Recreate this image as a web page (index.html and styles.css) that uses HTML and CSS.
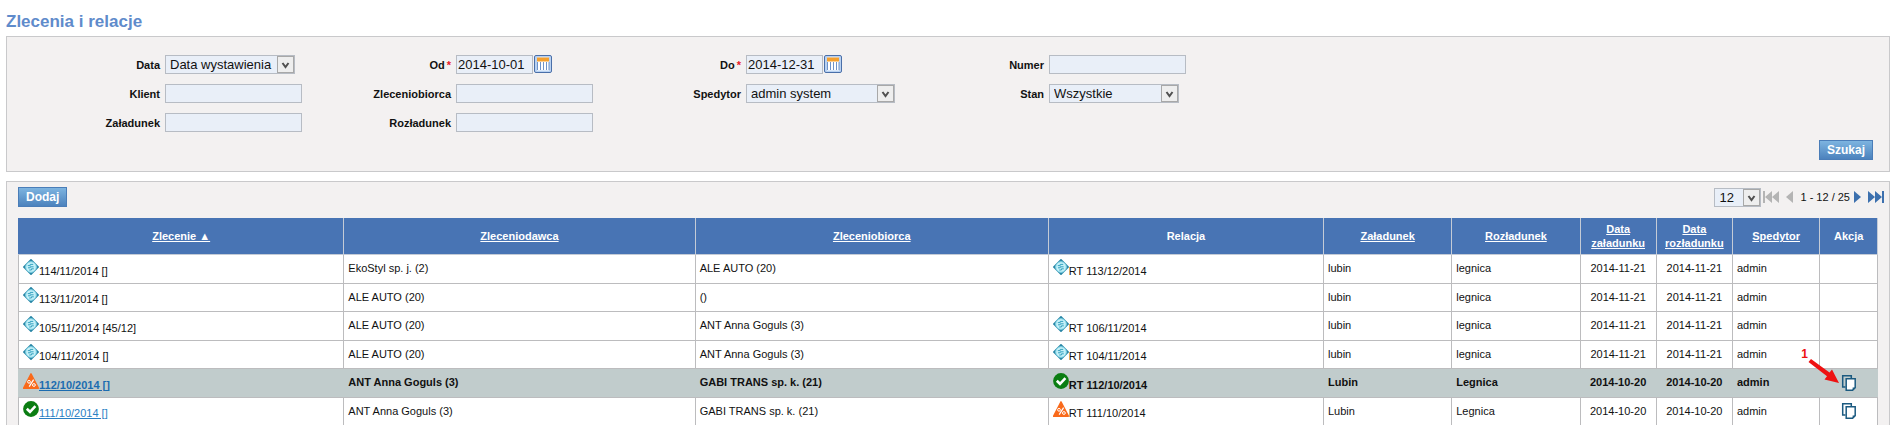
FILE: index.html
```html
<!DOCTYPE html>
<html lang="pl">
<head>
    <meta charset="UTF-8">
    <meta name="viewport" content="width=device-width, initial-scale=1.0">
    <title>Zlecenia i relacje</title>
    <link rel="stylesheet" href="styles.css">
</head>
<body>
    <!-- shared icons -->
    <svg class="sprite" aria-hidden="true">
        <symbol id="i-new" viewBox="0 0 16 16">
            <path d="M8 0.8 15.2 8 8 15.2 0.8 8Z" fill="#3c9dba" stroke="#2a86a6" stroke-width="1.6" stroke-linejoin="round"/>
            <circle cx="8" cy="8" r="5.3" fill="#c4f0f8" stroke="#7fd3e4"/>
            <path d="M4.8 6.6h2.4v-1.2h3M5 8.8h2.2v-1h3.4M6.2 11h2.2v-1.2h2.4" fill="none" stroke="#38a3c0"/>
        </symbol>
        <symbol id="i-warn" viewBox="0 0 16 16">
            <path d="M8 0.8 15.4 15.2H0.6Z" fill="#f96a1b" stroke="#f96a1b" stroke-width="1.4" stroke-linejoin="round"/>
            <path d="M10.6 6.6 6.2 13.6" stroke="#fff" stroke-width="1.2"/>
            <circle cx="6" cy="8.8" r="1.4" fill="none" stroke="#fff"/>
            <circle cx="10.9" cy="12" r="1.4" fill="none" stroke="#fff"/>
        </symbol>
        <symbol id="i-ok" viewBox="0 0 16 16">
            <circle cx="8" cy="8" r="7.9" fill="#0b7d12"/>
            <path d="M3.8 7.8 7 10.8 12.4 5.2" fill="none" stroke="#fff" stroke-width="2.6"/>
        </symbol>
        <symbol id="i-copy" viewBox="0 0 16 18">
            <path d="M4.5 12.9H1.7V1.7h8.6v2.4" fill="none" stroke="#1b5a80" stroke-width="1.5"/>
            <path d="M5.2 4.7h9v9l-2.6 2.6H5.2Z" fill="#fff" stroke="#1b5a80" stroke-width="1.5"/>
            <path d="M14.2 13.4h-2.6v2.9Z" fill="#1b5a80"/>
        </symbol>
        <symbol id="i-cal" viewBox="0 0 18 18">
            <rect x="0.5" y="0.5" width="17" height="17" rx="1.5" fill="#b9d2f2" stroke="#4a6fa8"/>
            <rect x="3" y="2.5" width="12" height="13" fill="#fff"/>
            <rect x="3" y="2.5" width="12" height="4" fill="#f5a02d"/>
            <path d="M3.5 7v8M6.5 7v8M9.5 7v8M12.5 7v8M15 7v8" stroke="#6f93c8"/>
        </symbol>
    </svg>

    <h1>Zlecenia i relacje</h1>

    <form class="panel search">
        <div class="fields">
            <div class="field">
                <label for="date-type">Data</label>
                <select id="date-type" class="w-medium"><option>Data wystawienia</option></select>
            </div>
            <div class="field">
                <label for="from">Od<span class="required">*</span></label>
                <div class="date">
                    <input type="text" id="from" value="2014-10-01">
                    <button type="button" class="icon-btn" aria-label="Kalendarz"><svg><use href="#i-cal"/></svg></button>
                </div>
            </div>
            <div class="field">
                <label for="to">Do<span class="required">*</span></label>
                <div class="date">
                    <input type="text" id="to" value="2014-12-31">
                    <button type="button" class="icon-btn" aria-label="Kalendarz"><svg><use href="#i-cal"/></svg></button>
                </div>
            </div>
            <div class="field">
                <label for="number">Numer</label>
                <input type="text" id="number">
            </div>
            <div class="field">
                <label for="client">Klient</label>
                <input type="text" id="client">
            </div>
            <div class="field">
                <label for="contractor">Zleceniobiorca</label>
                <input type="text" id="contractor">
            </div>
            <div class="field">
                <label for="forwarder">Spedytor</label>
                <select id="forwarder" class="w-wide"><option>admin system</option></select>
            </div>
            <div class="field">
                <label for="state">Stan</label>
                <select id="state" class="w-medium"><option>Wszystkie</option></select>
            </div>
            <div class="field">
                <label for="loading">Załadunek</label>
                <input type="text" id="loading">
            </div>
            <div class="field">
                <label for="unloading">Rozładunek</label>
                <input type="text" id="unloading">
            </div>
        </div>
        <div class="actions">
            <button type="submit" class="btn">Szukaj</button>
        </div>
    </form>

    <div class="panel list">
        <div class="toolbar">
            <button type="button" class="btn">Dodaj</button>
            <div class="pager">
                <select class="w-small" aria-label="Liczba wierszy"><option>12</option></select>
                <button type="button" class="page-btn first off" aria-label="Pierwsza">
                    <svg width="16" height="12"><path d="M0 0h2v12H0zM9 0v12L2 6zM16 0v12L9 6z"/></svg>
                </button>
                <button type="button" class="page-btn off" aria-label="Poprzednia">
                    <svg width="7" height="12"><path d="M7 0v12L0 6z"/></svg>
                </button>
                <span>1 - 12 / 25</span>
                <button type="button" class="page-btn" aria-label="Następna">
                    <svg width="7" height="12"><path d="M0 0v12l7-6z"/></svg>
                </button>
                <button type="button" class="page-btn" aria-label="Ostatnia">
                    <svg width="16" height="12"><path d="M0 0v12l7-6zM7 0v12l7-6zM14 0h2v12h-2z"/></svg>
                </button>
            </div>
        </div>

        <table>
            <colgroup>
                <col class="c-order"><col class="c-client"><col class="c-contractor"><col class="c-relation">
                <col class="c-place"><col class="c-place"><col class="c-date"><col class="c-date">
                <col class="c-user"><col class="c-action">
            </colgroup>
            <thead>
                <tr>
                    <th><a href="#">Zlecenie ▲</a></th>
                    <th><a href="#">Zleceniodawca</a></th>
                    <th><a href="#">Zleceniobiorca</a></th>
                    <th>Relacja</th>
                    <th><a href="#">Załadunek</a></th>
                    <th><a href="#">Rozładunek</a></th>
                    <th><a href="#">Data załadunku</a></th>
                    <th><a href="#">Data rozładunku</a></th>
                    <th><a href="#">Spedytor</a></th>
                    <th>Akcja</th>
                </tr>
            </thead>
            <tbody>
                <tr>
                    <td><svg class="icon"><use href="#i-new"/></svg>114/11/2014 []</td>
                    <td>EkoStyl sp. j. (2)</td>
                    <td>ALE AUTO (20)</td>
                    <td><svg class="icon"><use href="#i-new"/></svg>RT 113/12/2014</td>
                    <td>lubin</td>
                    <td>legnica</td>
                    <td class="center">2014-11-21</td>
                    <td class="center">2014-11-21</td>
                    <td>admin</td>
                    <td></td>
                </tr>
                <tr>
                    <td><svg class="icon"><use href="#i-new"/></svg>113/11/2014 []</td>
                    <td>ALE AUTO (20)</td>
                    <td>()</td>
                    <td></td>
                    <td>lubin</td>
                    <td>legnica</td>
                    <td class="center">2014-11-21</td>
                    <td class="center">2014-11-21</td>
                    <td>admin</td>
                    <td></td>
                </tr>
                <tr>
                    <td><svg class="icon"><use href="#i-new"/></svg>105/11/2014 [45/12]</td>
                    <td>ALE AUTO (20)</td>
                    <td>ANT Anna Goguls (3)</td>
                    <td><svg class="icon"><use href="#i-new"/></svg>RT 106/11/2014</td>
                    <td>lubin</td>
                    <td>legnica</td>
                    <td class="center">2014-11-21</td>
                    <td class="center">2014-11-21</td>
                    <td>admin</td>
                    <td></td>
                </tr>
                <tr>
                    <td><svg class="icon"><use href="#i-new"/></svg>104/11/2014 []</td>
                    <td>ALE AUTO (20)</td>
                    <td>ANT Anna Goguls (3)</td>
                    <td><svg class="icon"><use href="#i-new"/></svg>RT 104/11/2014</td>
                    <td>lubin</td>
                    <td>legnica</td>
                    <td class="center">2014-11-21</td>
                    <td class="center">2014-11-21</td>
                    <td>admin</td>
                    <td></td>
                </tr>
                <tr class="active">
                    <td><svg class="icon"><use href="#i-warn"/></svg><a href="#">112/10/2014 []</a></td>
                    <td>ANT Anna Goguls (3)</td>
                    <td>GABI TRANS sp. k. (21)</td>
                    <td><svg class="icon"><use href="#i-ok"/></svg>RT 112/10/2014</td>
                    <td>Lubin</td>
                    <td>Legnica</td>
                    <td class="center">2014-10-20</td>
                    <td class="center">2014-10-20</td>
                    <td>admin</td>
                    <td class="center marked">
                        <button type="button" class="icon-btn copy" aria-label="Kopiuj"><svg><use href="#i-copy"/></svg></button>
                        <div class="marker">
                            <span>1</span>
                            <svg width="32" height="26"><path d="M0.5 3 3 0 21.5 13.5 24 10.5 31 24 16.5 20.5 19 17.2Z" fill="#ee1111"/></svg>
                        </div>
                    </td>
                </tr>
                <tr>
                    <td><svg class="icon"><use href="#i-ok"/></svg><a href="#">111/10/2014 []</a></td>
                    <td>ANT Anna Goguls (3)</td>
                    <td>GABI TRANS sp. k. (21)</td>
                    <td><svg class="icon"><use href="#i-warn"/></svg>RT 111/10/2014</td>
                    <td>Lubin</td>
                    <td>Legnica</td>
                    <td class="center">2014-10-20</td>
                    <td class="center">2014-10-20</td>
                    <td>admin</td>
                    <td class="center">
                        <button type="button" class="icon-btn copy" aria-label="Kopiuj"><svg><use href="#i-copy"/></svg></button>
                    </td>
                </tr>
            </tbody>
        </table>
    </div>
</body>
</html>
```
FILE: styles.css
```css
* {
    box-sizing: border-box;
}
html {
    overflow: hidden;
}
body {
    margin: 0;
    padding: 12px 2px 0 6px;
    background-color: #fff;
    color: #111;
    font-family: "Liberation Sans", Arial, sans-serif;
    font-size: 11px;
}
.sprite {
    display: none;
}
h1 {
    margin: 0 0 4px;
    color: #5f8bcb;
    font-size: 17px;
    line-height: 20px;
}
.panel {
    border: 1px solid #c9c9cb;
    background-color: #f3f1f1;
}
.search {
    margin-bottom: 9px;
    padding: 18px 16px 11px 0;
}
.fields {
    display: grid;
    grid-template-columns: minmax(0, 291fr) minmax(0, 290fr) minmax(0, 303fr) minmax(0, 982fr);
    row-gap: 10px;
}
.field {
    display: grid;
    grid-template-columns: 153px 1fr;
    column-gap: 5px;
    align-items: center;
    justify-items: start;
    height: 19px;
}
.field label {
    justify-self: end;
    font-weight: bold;
}
.required {
    margin-left: 2px;
    color: #e8202a;
}
input, select {
    width: 137px;
    height: 19px;
    margin: 0;
    padding: 0 1px;
    border: 1px solid #b7bcc4;
    border-radius: 0;
    background-color: #e9eff8;
    color: #111;
    font-family: inherit;
    font-size: 13px;
}
select {
    appearance: none;
    padding: 0 4px;
    background-image: url("data:image/svg+xml,%3Csvg xmlns='http://www.w3.org/2000/svg' width='17' height='17'%3E%3Crect x='.5' y='.5' width='16' height='16' fill='%23eeeeee' stroke='%23a8a8a8'/%3E%3Cpath d='M5.5 7l3 4 3-4' fill='none' stroke='%23505050' stroke-width='2'/%3E%3C/svg%3E");
    background-repeat: no-repeat;
    background-position: right center;
}
.w-medium {
    width: 130px;
}
.w-wide {
    width: 149px;
}
.w-small {
    width: 47px;
}
.date {
    display: flex;
    gap: 1px;
}
.date input {
    width: 77px;
}
button {
    cursor: pointer;
}
.icon-btn {
    width: 18px;
    height: 18px;
    padding: 0;
    border: none;
    background: none;
}
.icon-btn svg {
    display: block;
    width: 18px;
    height: 18px;
}
.actions {
    display: flex;
    justify-content: flex-end;
    margin-top: 8px;
}
.btn {
    height: 20px;
    padding: 0 7px;
    border: 1px solid #4a7db8;
    background: linear-gradient(#7db4e0, #4c82bd);
    color: #fff;
    font-family: inherit;
    font-size: 12px;
    font-weight: bold;
    line-height: 18px;
}
.list {
    padding: 5px 11px 12px;
}
.toolbar {
    display: flex;
    justify-content: space-between;
    margin-bottom: 11px;
}
/* the pager reaches past the right edge of the table */
.pager {
    display: flex;
    align-items: center;
    height: 20px;
    margin-right: -6px;
}
.pager span {
    margin-right: 4px;
}
.page-btn {
    display: flex;
    margin-right: 7px;
    padding: 0;
    border: none;
    background: none;
    fill: #3c70ae;
}
.page-btn.first {
    margin-left: 2px;
}
.page-btn.off {
    fill: #b4b4b4;
}
.page-btn:last-child {
    margin-right: 0;
}
table {
    width: 100%;
    border-collapse: collapse;
    table-layout: fixed;
    background-color: #fff;
}
.c-order {
    width: 17.5%;
}
.c-client {
    width: 18.9%;
}
.c-contractor {
    width: 19%;
}
.c-relation {
    width: 14.8%;
}
.c-place {
    width: 6.9%;
}
.c-date {
    width: 4.1%;
}
.c-user {
    width: 4.7%;
}
th {
    height: 36px;
    padding: 0 4px 1px;
    border: 1px solid #c4cbd6;
    border-top-color: #4874b4;
    background-color: #4874b4;
    color: #fff;
    line-height: 14px;
}
th:first-child {
    border-left-color: #4874b4;
}
th a {
    color: inherit;
}
td {
    height: 29px;
    padding: 0 4px 1px;
    border: 1px solid #bcbcbe;
    line-height: 15px;
}
tr:nth-child(even) td {
    height: 28px;
}
td a {
    color: #2a80c4;
}
.icon {
    width: 16px;
    height: 16px;
    vertical-align: baseline;
}
.center {
    text-align: center;
}
.active td {
    border-left-color: #c1cccc;
    border-right-color: #c1cccc;
    background-color: #c1cccc;
    font-weight: bold;
}
.active a {
    color: #1c6cb0;
}
.copy {
    vertical-align: middle;
}
.marked {
    position: relative;
}
/* callout arrow over the copy button */
.marker {
    position: absolute;
    top: -22px;
    left: -19px;
    display: flex;
    color: #ee1111;
    font-size: 12px;
    pointer-events: none;
}
.marker svg {
    margin-top: 12px;
}
```
